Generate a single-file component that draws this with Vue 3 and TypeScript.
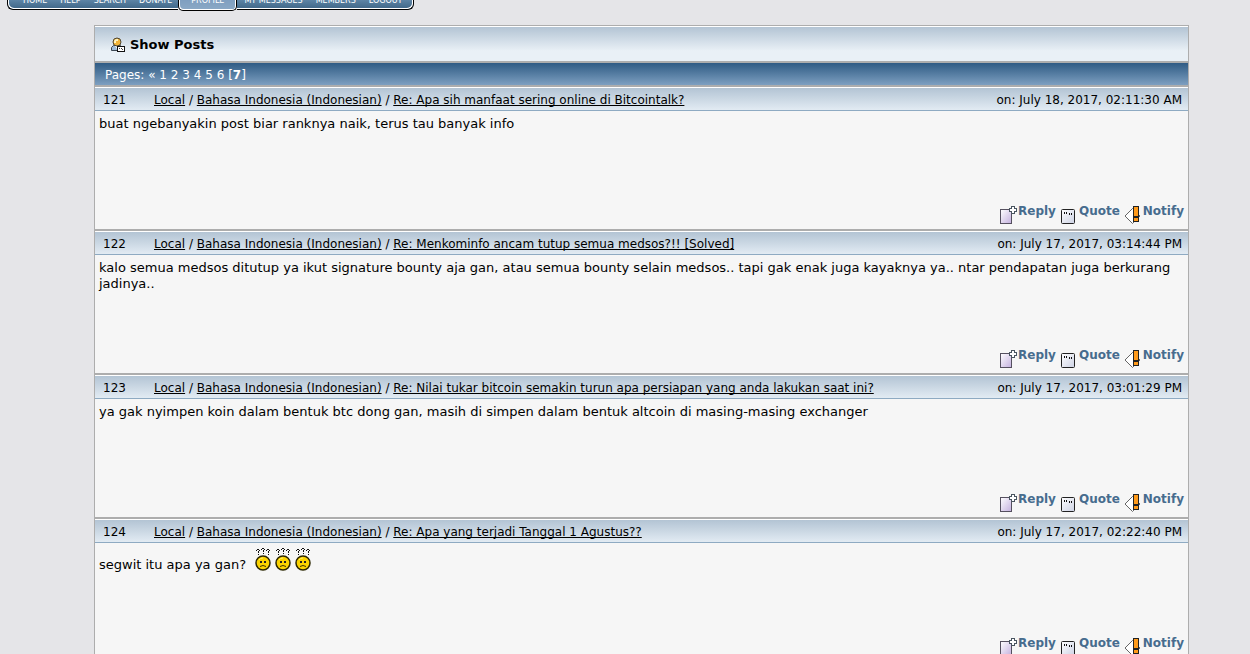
<script setup lang="ts">
interface Post {
  id: number
  topic: string
  date: string
  text: string
  smileys?: number
}

const menu: string[] = ['Home', 'Help', 'Search', 'Donate', 'Profile', 'My Messages', 'Members', 'Logout']
const pages: number[] = [1, 2, 3, 4, 5, 6]

const posts: Post[] = [
  { id: 121, topic: 'Re: Apa sih manfaat sering online di Bitcointalk?', date: 'July 18, 2017, 02:11:30 AM', text: 'buat ngebanyakin post biar ranknya naik, terus tau banyak info' },
  { id: 122, topic: 'Re: Menkominfo ancam tutup semua medsos?!! [Solved]', date: 'July 17, 2017, 03:14:44 PM', text: 'kalo semua medsos ditutup ya ikut signature bounty aja gan, atau semua bounty selain medsos.. tapi gak enak juga kayaknya ya.. ntar pendapatan juga berkurang jadinya..' },
  { id: 123, topic: 'Re: Nilai tukar bitcoin semakin turun apa persiapan yang anda lakukan saat ini?', date: 'July 17, 2017, 03:01:29 PM', text: 'ya gak nyimpen koin dalam bentuk btc dong gan, masih di simpen dalam bentuk altcoin di masing-masing exchanger' },
  { id: 124, topic: 'Re: Apa yang terjadi Tanggal 1 Agustus??', date: 'July 17, 2017, 02:22:40 PM', text: 'segwit itu apa ya gan?', smileys: 3 },
]
</script>

<template>
  <div class="page">
    <nav class="menu">
      <a v-for="item in menu" :key="item" href="#" :class="{ active: item === 'Profile' }">{{ item }}</a>
    </nav>

    <main class="frame">
      <h1 class="heading">
        <svg class="icon-user" width="16" height="16" viewBox="0 0 16 16">
          <path d="M1.500 13.500v-3l2-2h7l2 2v3z" fill="#9fbbd8" stroke="#3c4652" />
          <path d="M5 9l2 3l2-3z" fill="#f4f7fa" />
          <circle cx="7" cy="5" r="4" fill="#f2b53a" stroke="#4d4636" />
          <path d="M4 5q0-3 3-3h1v2h-2v2h-2z" fill="#fff3c2" />
          <path d="M7 9h8v6h-8z" fill="#111" />
          <path d="M8 10h6v4h-6z" fill="#fff" />
          <path d="M9 11h1v1h-1zM11 11h1v1h-1zM12 12h1v1h-1z" fill="#444" />
        </svg>
        <span>Show Posts</span>
      </h1>

      <div class="pages">
        Pages: <a href="#">«</a>
        <template v-for="n in pages" :key="n">{{ ' ' }}<a href="#">{{ n }}</a></template>
        <span> [<b>7</b>]</span>
      </div>

      <article v-for="post in posts" :key="post.id" class="post">
        <header class="bar">
          <span class="num">{{ post.id }}</span>
          <span class="path"><a href="#">Local</a> / <a href="#">Bahasa Indonesia (Indonesian)</a> / <a href="#">{{ post.topic }}</a></span>
          <span class="date">on: {{ post.date }}</span>
        </header>
        <div class="content">
          <p>
            {{ post.text }}
            <span v-if="post.smileys" class="smileys">
              <svg v-for="s in post.smileys" :key="s" width="16" height="23" viewBox="0 0 16 23">
                <g fill="#111" shape-rendering="crispEdges">
                  <path d="M2 1h2v1h-2zM1 2h1v1h-1zM4 2h1v1h-1zM3 3h1v2h-1zM3 6h1v1h-1z" />
                  <path d="M7 0h2v1h-2zM6 1h1v1h-1zM9 1h1v1h-1zM8 2h1v2h-1zM8 5h1v1h-1z" />
                  <path d="M12 1h2v1h-2zM11 2h1v1h-1zM14 2h1v1h-1zM13 3h1v2h-1zM13 6h1v1h-1z" />
                </g>
                <circle cx="8" cy="15" r="7" fill="#fbd300" stroke="#2b2600" stroke-width="1.500" />
                <path d="M4 12q1-2 4-2" fill="none" stroke="#fff36b" />
                <path d="M5 13h2v2h-2zM9 13h2v2h-2z" fill="#222" />
                <path d="M5 18.500q3-2 6 0" fill="none" stroke="#3b3000" />
              </svg>
            </span>
          </p>
          <div class="actions">
            <a href="#">
              <svg width="18" height="18" viewBox="0 0 18 18" shape-rendering="crispEdges">
                <defs>
                  <linearGradient id="sheet" x1="0" y1="0" x2="1" y2="1">
                    <stop offset="0" stop-color="#fff" />
                    <stop offset="1" stop-color="#c3b0de" />
                  </linearGradient>
                </defs>
                <path d="M1.500 3.500h11v14h-11z" fill="url(#sheet)" stroke="#55505f" />
                <path d="M12 0h4v2h2v4h-2v2h-4v-2h-2v-4h2z" fill="#4a5560" />
                <path d="M13 1h2v2h2v2h-2v2h-2v-2h-2v-2h2z" fill="#fff" />
              </svg>Reply</a>
            <a href="#">
              <svg width="18" height="18" viewBox="0 0 18 18">
                <defs>
                  <linearGradient id="note" x1="0" y1="0" x2="1" y2="1">
                    <stop offset="0" stop-color="#fff" />
                    <stop offset="1" stop-color="#cdd2e4" />
                  </linearGradient>
                </defs>
                <rect x="1.500" y="3.500" width="13" height="14" rx="1" fill="url(#note)" stroke="#222" />
                <path d="M4 6h1v2h-1zM6 6h1v2h-1zM9 7h1v2h-1zM11 7h1v2h-1z" fill="#111" />
              </svg>Quote</a>
            <a href="#">
              <svg width="18" height="18" viewBox="0 0 18 18">
                <path d="M8.500 2.500L1 10L8.500 17.500L16 10z" fill="#fff" stroke="#666" />
                <path d="M9 0h6v11h-6zM9 11h6v5h-6z" fill="#222" />
                <path d="M10 1h4v9h-4zM10 12h4v3h-4z" fill="#ff9a1a" />
              </svg>Notify</a>
          </div>
        </div>
      </article>
    </main>
  </div>
</template>

<style>
body {
  background: #e5e5e8;
}
</style>

<style scoped>
.page {
  height: 100vh;
  overflow: hidden;
  font-family: Verdana, "DejaVu Sans", sans-serif;
  font-size: 13px;
  line-height: 16px;
  color: #000;
}
a {
  color: inherit;
}
.menu {
  display: flex;
  align-items: flex-start;
  width: max-content;
  height: 11px;
  margin-left: 7px;
  font-size: 8px;
  line-height: 2px;
  text-transform: uppercase;
  color: #fff;
}
.menu a {
  box-sizing: border-box;
  height: 10px;
  padding: 0 6px 0 7px;
  background: linear-gradient(#5d84a5, #3f6687);
  border-bottom: 1px solid #000;
  box-shadow: inset 0 -1px #fff;
  text-decoration: none;
}
.menu a:first-child {
  padding-left: 15px;
  border-left: 1px solid #000;
  border-bottom-left-radius: 6px;
  box-shadow: inset 1px -1px #fff;
}
.menu a:last-child {
  padding-right: 11px;
  border-right: 1px solid #000;
  border-bottom-right-radius: 6px;
  box-shadow: inset -1px -1px #fff;
}
.menu a.active {
  height: 11px;
  padding: 0 12px;
  background: linear-gradient(#7f9fc0, #8ba9c6);
  border: 1px solid #000;
  border-top: 0;
  border-radius: 0 0 5px 5px;
  box-shadow: inset 1px -1px #fff, inset -1px 0 #fff;
}
.frame {
  margin: 14px 61px 0 94px;
  border: 1px solid #adadad;
  background: #f6f6f6;
}
.heading {
  display: flex;
  align-items: center;
  gap: 4px;
  height: 32px;
  margin: 0;
  padding: 2px 0 0 15px;
  border-top: 1px solid #fff;
  border-bottom: 2px solid #adadad;
  background: linear-gradient(#b3c4d4, #e9f0f6 70%);
  font-size: 13px;
}
.pages {
  height: 22px;
  padding-left: 10px;
  border-bottom: 2px solid #adadad;
  background: linear-gradient(#2f5b84, #7d9fc0);
  color: #fff;
  font-size: 12px;
  line-height: 24px;
}
.pages a {
  text-decoration: none;
}
.post {
  border-bottom: 2px solid #adadad;
}
.bar {
  display: flex;
  height: 22px;
  padding: 0 6px 0 8px;
  border-top: 1px solid #fff;
  border-bottom: 1px solid #8eaac2;
  background: linear-gradient(#b3c4d4, #e2ebf3);
  font-size: 12px;
  line-height: 24px;
}
.bar a {
  text-decoration-skip-ink: none;
}
.num {
  width: 51px;
}
.path {
  flex: 1;
}
.content {
  display: flex;
  flex-direction: column;
  justify-content: space-between;
  box-sizing: border-box;
  min-height: 118px;
  padding: 5px 4px;
}
.content p {
  margin: 0;
}
.smileys {
  display: inline-flex;
  gap: 4px;
  margin-left: 5px;
  vertical-align: -2px;
}
.actions {
  display: flex;
  justify-content: flex-end;
  gap: 4px;
  font-size: 12px;
  font-weight: bold;
  line-height: 10px;
  color: #476c8e;
}
.actions a {
  display: flex;
  gap: 1px;
  text-decoration: none;
}
</style>
